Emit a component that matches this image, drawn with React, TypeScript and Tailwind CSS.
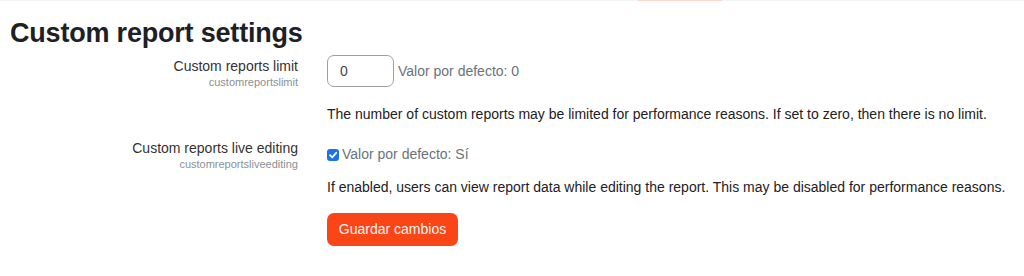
import React from "react";

export default function App() {
  return (
    <div className="relative w-[1024px] h-[276px] bg-white overflow-hidden text-[#1d2125]" style={{ fontFamily: '"Liberation Sans", Arial, sans-serif' }}>
      <div className="absolute top-0 left-0 w-full h-px bg-[#f3f3f3]" />
      <div className="absolute top-0 left-[638px] w-[84px] h-px bg-[#fcd7cc]" />
      <div className="px-[10px] pt-[18px]">
        <h2 className="text-[27px] leading-[30px] font-bold tracking-[-0.2px] text-[#1d2125]">Custom report settings</h2>
        <div className="grid grid-cols-[288px_1fr] gap-x-[29px] mt-[7px]">
          <div className="text-right pt-[1px]">
            <div className="text-[14px] leading-[21px] text-[#333]">Custom reports limit</div>
            <div className="text-[11px] leading-[13px] text-[#8a9096] mt-[-1px]">customreportslimit</div>
          </div>
          <div>
            <div className="flex items-center">
              <div className="w-[67px] h-[32px] border border-[#9ca0a4] rounded-[7px] flex items-center pl-[12px] text-[14px] text-[#444]">0</div>
              <span className="ml-[4px] text-[14px] text-[#6a737b]">Valor por defecto: 0</span>
            </div>
            <p className="mt-[17px] text-[14px] leading-[21px] text-[#1d2125]">
              The number of custom reports may be limited for performance reasons. If set to zero, then there is no limit.
            </p>
          </div>
          <div className="text-right mt-[13px]">
            <div className="text-[14px] leading-[21px] text-[#333]">Custom reports live editing</div>
            <div className="text-[11px] leading-[13px] text-[#8a9096] mt-[-1px]">customreportsliveediting</div>
          </div>
          <div className="mt-[13px]">
            <div className="flex items-center mt-[6px] h-[21px]">
              <span className="w-[12px] h-[12px] rounded-[3px] bg-[#1a73e8] flex items-center justify-center">
                <svg width="10" height="10" viewBox="0 0 10 10"><path d="M2 5.2 L4.2 7.4 L8.2 2.8" stroke="white" strokeWidth="1.8" fill="none" strokeLinecap="round" strokeLinejoin="round" /></svg>
              </span>
              <span className="ml-[3px] text-[14px] text-[#6a737b]">Valor por defecto: Sí</span>
            </div>
            <p className="mt-[12px] text-[14px] leading-[21px] text-[#1d2125]">
              If enabled, users can view report data while editing the report. This may be disabled for performance reasons.
            </p>
            <button className="mt-[15px] h-[33px] w-[131px] rounded-[7px] bg-[#fa4616] text-[#fff4f0] text-[14px]">Guardar cambios</button>
          </div>
        </div>
      </div>
    </div>
  );
}
